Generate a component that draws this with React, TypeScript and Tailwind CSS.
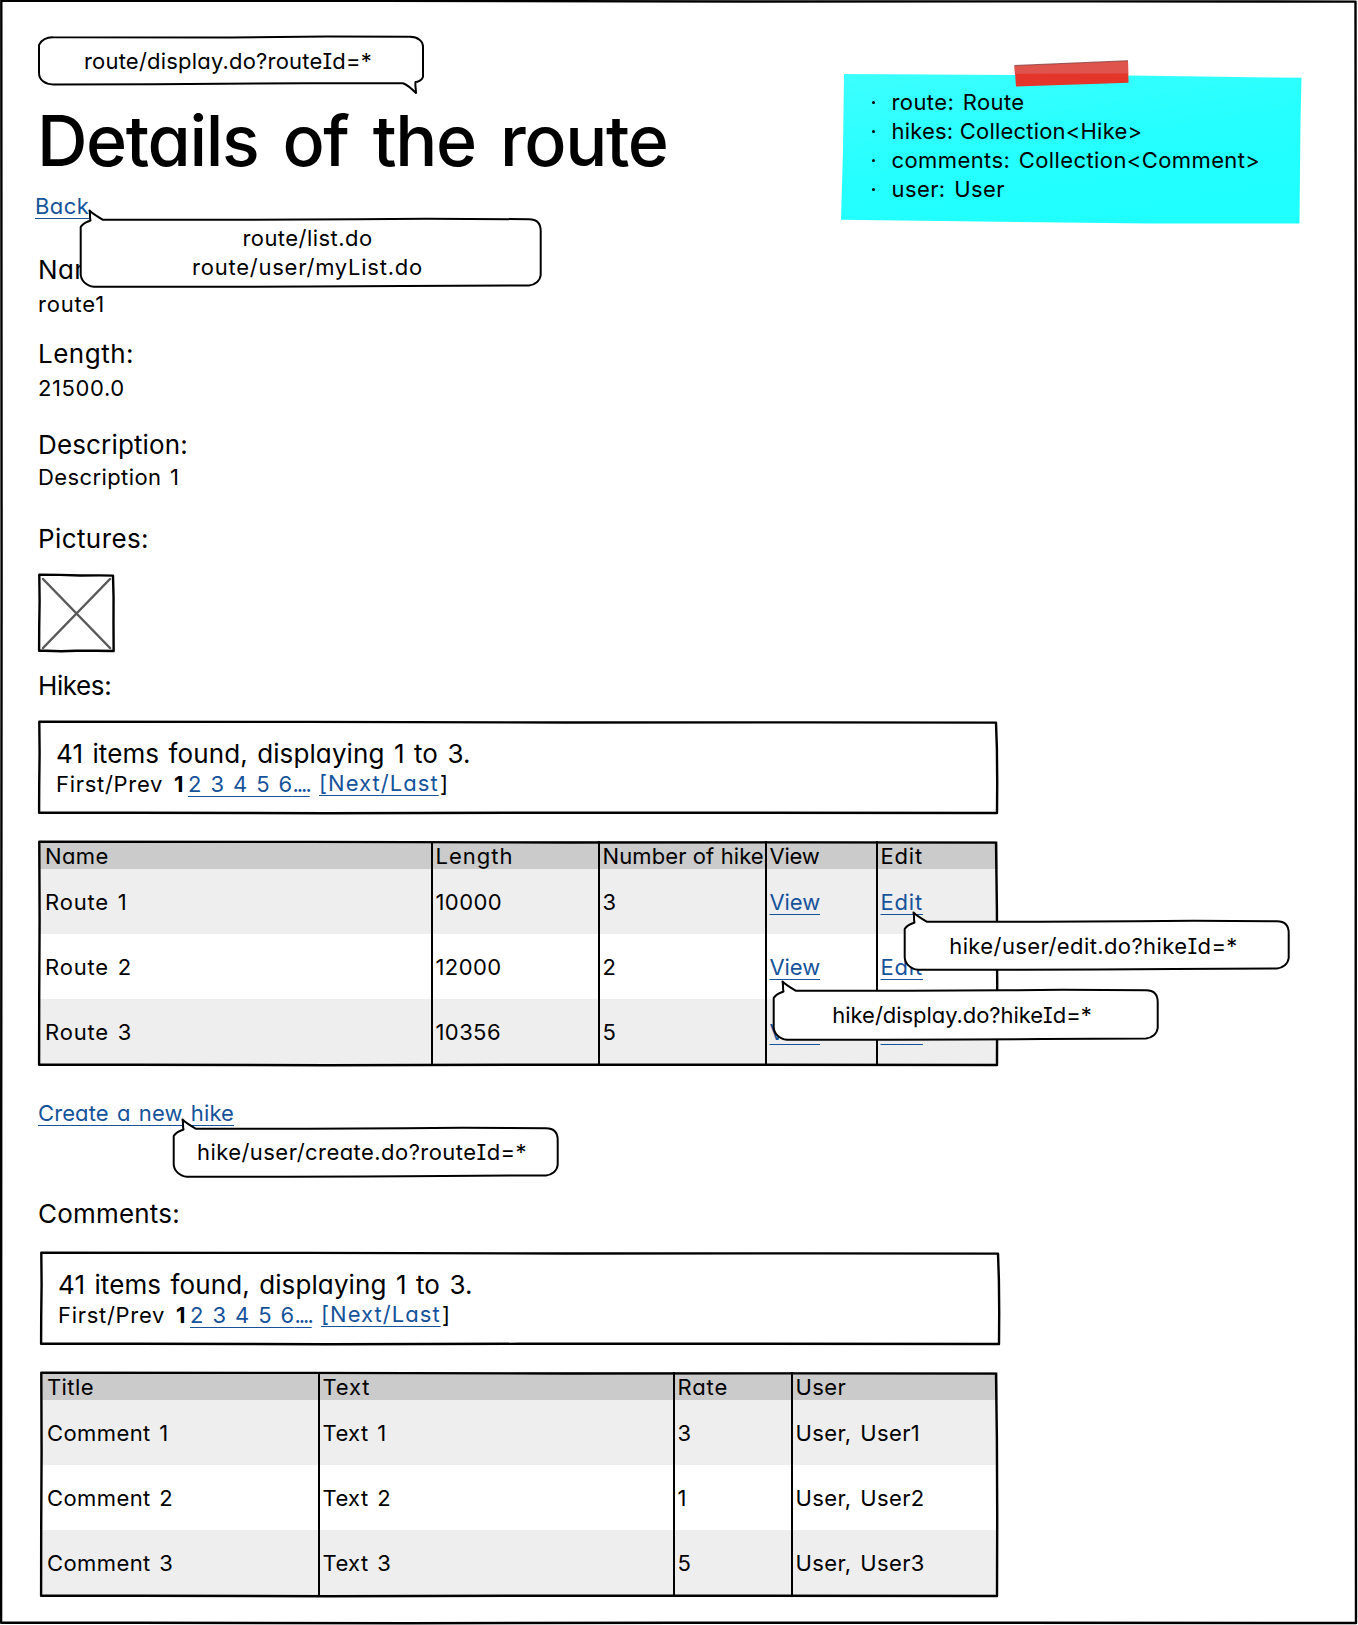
import type { ReactNode } from 'react';

/** Slightly uneven pencil outline drawn over its parent box. */
function SketchFrame({ w, h, r = 1 }: { w: number; h: number; r?: number }) {
  const d = [
    `M1.3 0.8 L${w * 0.28} 0.9 L${w * 0.55} 1.5 L${w * 0.8} 1.4 L${w - 2} 1.6`,
    `L${w - 1.6 + r * 0.5} ${h * 0.3} L${w - 1.8 + r} ${h * 0.65} L${w - 1.5 + r * 0.5} ${h - 1}`,
    `L${w * 0.75} ${h - 1.2} L${w * 0.5} ${h - 1.2} L${w * 0.3} ${h - 0.8} L${w * 0.1} ${h - 1.2} L1.1 ${h - 1.3}`,
    `L1.2 ${h * 0.7} L${1.6} ${h * 0.35} Z`,
  ].join(' ');
  return (
    <svg className="pointer-events-none absolute inset-0 overflow-visible" width={w} height={h} fill="none" stroke="#000" strokeWidth="2.4" strokeLinejoin="round">
      <path d={d} />
    </svg>
  );
}

/** Speech bubble with a tail either at the top left or at the bottom right. */
function Bubble({ w, h, tail, className, children }: { w: number; h: number; tail: 'top' | 'bottom'; className: string; children: ReactNode }) {
  const d =
    tail === 'top'
      ? `M0.7 9 C3 5 6 4.5 10.5 2.5 C9.5 -1 10.5 -4 9.5 -7.5 C13 -4 19 -0.5 23 1.8 L${w * 0.35} 1.8 L${w * 0.6} 1.3 L${w * 0.75} 0.8 L${w - 13} 1.2 C${w - 5} 1.2 ${w - 1.3} 6 ${w - 1.3} 13 L${w - 1.3} ${h - 12} C${w - 2} ${h - 6} ${w - 7} ${h - 2} ${w - 13} ${h - 1.6} L${w * 0.7} ${h - 1} L${w * 0.5} ${h - 0.6} L${w * 0.3} ${h - 0.2} L14 ${h - 0.2} C6 ${h - 1} 0.7 ${h - 7} 0.7 ${h - 13} Z`
      : `M1 9 C3 4 9 1 15 1.2 L${w * 0.5} 1.4 L${w * 0.75} 0.4 L${w - 14} 0.8 C${w - 6} 1 ${w - 1} 5 ${w - 1} 11 L${w - 1} ${h - 7} C${w - 2} ${h - 4} ${w - 6} ${h - 2} ${w - 8.5} ${h - 2} C${w - 9} ${h + 2} ${w - 8} ${h + 5} ${w - 8} ${h + 9} C${w - 12} ${h + 5} ${w - 16} ${h + 1} ${w - 21} ${h - 0.8} L${w * 0.7} ${h - 0.8} L${w * 0.3} ${h + 0.3} L15 ${h + 0.4} C7 ${h} 1 ${h - 4} 1 ${h - 11} Z`;
  return (
    <div className={`flex flex-col items-center justify-center text-center ${className}`}>
      <svg className="absolute inset-0 overflow-visible" width={w} height={h} fill="#fff" stroke="#000" strokeWidth="2" strokeLinejoin="round">
        <path d={d} />
      </svg>
      <div className="relative pt-[2px] leading-[29px]">{children}</div>
    </div>
  );
}

function Link({ children, className = '' }: { children: ReactNode; className?: string }) {
  return (
    <a className={`text-[#15539a] underline decoration-1 underline-offset-[4px] [text-decoration-skip-ink:none] ${className}`}>{children}</a>
  );
}

function Label({ children, className = '' }: { children: ReactNode; className?: string }) {
  return <h2 className={`text-[26px] leading-8 ${className}`}>{children}</h2>;
}

function Pager({ className }: { className: string }) {
  return (
    <div className={`relative h-[93px] w-[960px] pt-[17px] pl-[18px] ${className}`}>
      <SketchFrame w={960} h={93} />
      <p className="text-[26px] leading-8 tracking-[0.1px]">41 items found, displaying 1 to 3.</p>
      <div className="flex leading-7">
        <span className="w-[118px] tracking-[0.7px]">First/Prev</span>
        <b className="w-[14px]">1</b>
        <Link className="w-[131px] tracking-[0.2px] [word-spacing:2.4px]">
          2 3 4 5 6<span className="tracking-[-2px]">....</span>
        </Link>
        <Link className="-mt-[1.5px] w-[121px] tracking-[1.05px]">[Next/Last</Link>
        <span>]</span>
      </div>
    </div>
  );
}

function Grid({ w, cols, head, rows, className }: { w: number; cols: string; head: ReactNode[]; rows: ReactNode[][]; className: string }) {
  const line = (i: number) => (i ? 'border-l-2 border-black pl-[2.5px]' : 'pl-[7px]');
  return (
    <div className={`relative h-[225px] ${className}`}>
      <div className={`grid h-7 bg-[#cbcbcb] ${cols}`}>
        {head.map((c, i) => (
          <div key={i} className={`overflow-hidden pt-px leading-7 whitespace-nowrap ${line(i)}`}>{c}</div>
        ))}
      </div>
      {rows.map((row, n) => (
        <div key={n} className={`grid h-[65px] ${cols} ${n % 2 ? 'bg-white' : 'bg-[#eeeeee]'}`}>
          {row.map((c, i) => (
            <div key={i} className={`flex items-center ${line(i)}`}>{c}</div>
          ))}
        </div>
      ))}
      <SketchFrame w={w} h={225} />
    </div>
  );
}

const view = <Link className="tracking-[-0.1px]">View</Link>;
const edit = <Link className="tracking-[0.8px]">Edit</Link>;

const hikes = [
  [<span className="tracking-[0.8px]">Route 1</span>, '10000', '3', view, edit],
  [<span className="tracking-[0.8px]">Route 2</span>, '12000', '2', view, edit],
  [<span className="tracking-[0.8px]">Route 3</span>, '10356', '5', view, edit],
];

const comments = [
  ['Comment 1', 'Text 1', '3', 'User, User1'],
  ['Comment 2', 'Text 2', '1', 'User, User2'],
  ['Comment 3', 'Text 3', '5', 'User, User3'],
];

function Note() {
  const lines = [
    'route: Route',
    <span className="tracking-[0.2px] [word-spacing:0]">{'hikes: Collection<Hike>'}</span>,
    'comments: Collection<Comment>',
    'user: User',
  ];
  return (
    <aside className="relative mt-[37px] mr-[57px] h-[151px] w-[460px]">
      <svg className="absolute inset-0 overflow-visible" width="460" height="151" viewBox="841 73 460 151">
        <defs>
          <linearGradient id="paper" x1="0" y1="0" x2="0.5" y2="1">
            <stop offset="0" stopColor="#3dffff" />
            <stop offset="0.6" stopColor="#25ffff" />
            <stop offset="1" stopColor="#20ffff" />
          </linearGradient>
        </defs>
        <path d="M844 74 L1130 75.5 L1301.5 77.8 L1300.5 122 L1299.5 223.5 L1150 223.5 L980 221.5 L841 219.8 L843 150 Z" fill="url(#paper)" />
        <path d="M1014.5 65.8 L1128 61 L1128.5 82.8 L1016 86.5 Z" fill="#e4352b" />
        <path d="M1014.5 65.8 L1128 61 L1128.2 73.5 L1014.8 73.8 Z" fill="#df544c" />
        <path d="M1014.5 65.5 L1128 60.7" stroke="#7c3a38" strokeWidth="0.8" />
      </svg>
      <ul className="relative pt-[15px] pl-[29px] leading-[29px] tracking-[0.4px]">
        {lines.map((l, i) => (
          <li key={i} className="flex items-center">
            <span className="mr-[16.5px] ml-[2px] size-[3px] rounded-full bg-black" />
            {l}
          </li>
        ))}
      </ul>
    </aside>
  );
}

export default function App() {
  return (
    <div className="relative h-[1625px] w-[1358px] overflow-hidden bg-white pt-9 pl-[38px] font-['Inter',sans-serif] text-[22px] leading-7 tracking-[0.4px] text-black [font-feature-settings:'cv11','cv08'] [word-spacing:2px]">
      <header className="flex h-[145px] justify-between">
        <div>
          <Bubble w={386} h={48} tail="bottom" className="relative h-12 w-[386px] pr-[6px]">
            <span className="tracking-[0.2px]">route/display.do?routeId=*</span>
          </Bubble>
          <h1 className="mt-[17px] -ml-px text-[70px] leading-[80px] font-medium tracking-[-1.4px] whitespace-nowrap [word-spacing:7px]">Details of the route</h1>
        </div>
        <Note />
      </header>

      <div className="relative mt-[11px] -ml-[3px]">
        <Link>Back</Link>
        <Bubble w={462} h={69} tail="top" className="absolute top-[25.5px] left-[45px] z-10 h-[69px] w-[462px] pr-[7px]">
          <p className="tracking-[0.45px]">route/list.do</p>
          <p className="tracking-[0.75px]">route/user/myList.do</p>
        </Bubble>
      </div>

      <Label className="mt-[34px]">Name:</Label>
      <p className="mt-1 tracking-[0.8px]">route1</p>
      <Label className="mt-5 tracking-[0.5px]">Length:</Label>
      <p className="mt-1 tracking-[0.6px]">21500.0</p>
      <Label className="mt-[27px] tracking-[0.15px]">Description:</Label>
      <p className="mt-[2px] tracking-[0.4px]">Description 1</p>
      <Label className="mt-8">Pictures:</Label>
      <div className="relative mt-[19px] h-[78px] w-[77px]">
        <svg width="77" height="78" fill="none" stroke="#595959" strokeWidth="2.5" strokeLinecap="round">
          <path d="M5 5 L72 74 M72 5 L5 74" />
        </svg>
        <SketchFrame w={77} h={78} r={0.3} />
      </div>
      <Label className="mt-[18px] tracking-[-0.4px]">Hikes:</Label>

      <Pager className="mt-[19px]" />
      <div className="relative">
        <Grid
          w={960}
          className="mt-[27px] w-[960px]"
          cols="grid-cols-[393px_167px_167px_111px_1fr]"
          head={[
            'Name',
            <span className="tracking-[1px]">Length</span>,
            <span className="block w-[162px] overflow-hidden tracking-[0.1px] [word-spacing:0]">Number of hikes</span>,
            <span className="tracking-[-0.2px]">View</span>,
            <span className="tracking-[0.8px]">Edit</span>,
          ]}
          rows={hikes}
        />
        <Bubble w={386} h={50} tail="top" className="absolute top-[79px] left-[865.5px] h-[50px] w-[386px] pr-[6px]">
          <span className="tracking-[0.4px]">hike/user/edit.do?hikeId=*</span>
        </Bubble>
        <Bubble w={386} h={51} tail="top" className="absolute top-[148px] left-[734.5px] h-[51px] w-[386px] pr-[7px]">
          <span className="tracking-[-0.05px]">hike/display.do?hikeId=*</span>
        </Bubble>
      </div>

      <div className="relative mt-[33px]">
        <Link className="tracking-[0.1px]">Create a new hike</Link>
        <Bubble w={386} h={50} tail="top" className="absolute top-[27.5px] left-[134.5px] h-[50px] w-[386px] pr-[7px]">
          <span className="tracking-[0.45px]">hike/user/create.do?routeId=*</span>
        </Bubble>
      </div>

      <Label className="mt-[71px] tracking-[0.2px]">Comments:</Label>
      <Pager className="mt-[22px] ml-[2px]" />
      <Grid
        w={958}
        className="mt-[27px] ml-[2px] w-[958px]"
        cols="grid-cols-[278px_355px_118px_1fr]"
        head={['Title', <span className="tracking-[0.8px]">Text</span>, <span className="tracking-[0.9px]">Rate</span>, 'User']}
        rows={comments}
      />
      <SketchFrame w={1357.5} h={1624} r={0} />
    </div>
  );
}
